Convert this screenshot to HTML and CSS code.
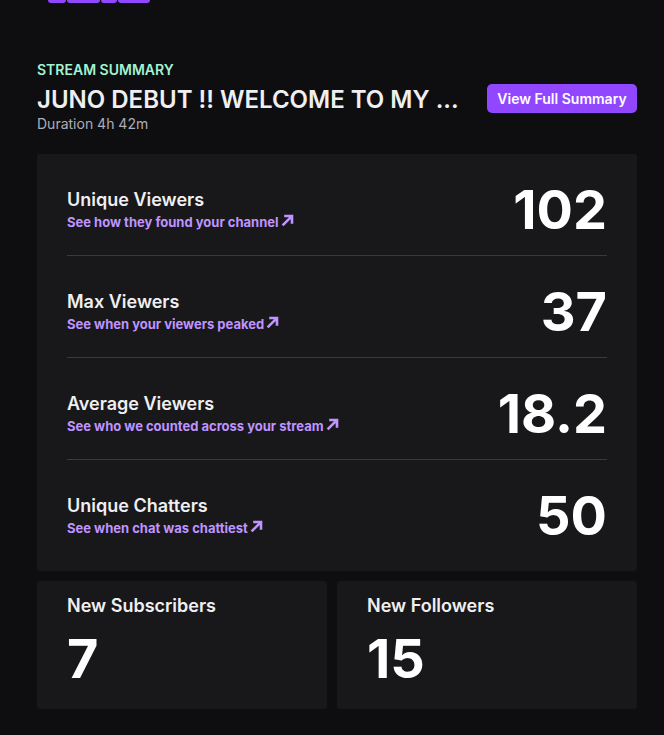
FILE: index.html
```html
<!DOCTYPE html>
<html lang="en">
<head>
<meta charset="utf-8">
<title>Stream Summary</title>
<link rel="stylesheet" href="styles.css">
</head>
<body>
<div class="topbar">
  <span class="seg s1"></span><span class="seg s2"></span><span class="seg s3"></span><span class="seg s4"></span>
</div>
<main class="page">
  <header class="head">
    <div class="head-text">
      <div class="eyebrow">STREAM SUMMARY</div>
      <h1 class="title">JUNO DEBUT !! WELCOME TO MY ...</h1>
      <div class="duration">Duration 4h 42m</div>
    </div>
    <button class="btn">View Full Summary</button>
  </header>

  <section class="card stats">
    <div class="row">
      <div class="row-text">
        <div class="label">Unique Viewers</div>
        <a class="link">See how they found your channel<svg class="arrow" viewBox="0 0 13 13" width="13" height="13"><path d="M1.6 11.4 L10.6 2.4 M3.2 2 H11 V9.8" fill="none" stroke="#bf94ff" stroke-width="2.6"/></svg></a>
      </div>
      <div class="num">102</div>
    </div>
    <div class="row">
      <div class="row-text">
        <div class="label">Max Viewers</div>
        <a class="link">See when your viewers peaked<svg class="arrow" viewBox="0 0 13 13" width="13" height="13"><path d="M1.6 11.4 L10.6 2.4 M3.2 2 H11 V9.8" fill="none" stroke="#bf94ff" stroke-width="2.6"/></svg></a>
      </div>
      <div class="num">37</div>
    </div>
    <div class="row">
      <div class="row-text">
        <div class="label">Average Viewers</div>
        <a class="link">See who we counted across your stream<svg class="arrow" viewBox="0 0 13 13" width="13" height="13"><path d="M1.6 11.4 L10.6 2.4 M3.2 2 H11 V9.8" fill="none" stroke="#bf94ff" stroke-width="2.6"/></svg></a>
      </div>
      <div class="num">18.2</div>
    </div>
    <div class="row last">
      <div class="row-text">
        <div class="label">Unique Chatters</div>
        <a class="link">See when chat was chattiest<svg class="arrow" viewBox="0 0 13 13" width="13" height="13"><path d="M1.6 11.4 L10.6 2.4 M3.2 2 H11 V9.8" fill="none" stroke="#bf94ff" stroke-width="2.6"/></svg></a>
      </div>
      <div class="num">50</div>
    </div>
  </section>

  <section class="pair">
    <div class="card small subs">
      <div class="label">New Subscribers</div>
      <div class="num">7</div>
    </div>
    <div class="card small follows">
      <div class="label">New Followers</div>
      <div class="num">15</div>
    </div>
  </section>
</main>
</body>
</html>
```
FILE: styles.css
```css
* { box-sizing: border-box; }
html, body { margin: 0; padding: 0; }
body {
  background: #0e0e10;
  color: #efeff1;
  font-family: Inter, "Noto Sans", sans-serif;
  width: 664px;
  height: 735px;
  overflow: hidden;
}
.topbar {
  display: flex;
  gap: 1px;
  padding-left: 48px;
  height: 3px;
}
.seg {
  display: block;
  height: 3px;
  background: #9147ff;
  border-radius: 0 0 3px 3px;
}
.s1 { width: 18px; }
.s2 { width: 33px; }
.s3 { width: 16px; }
.s4 { width: 32px; }

.page {
  width: 600px;
  margin-left: 37px;
  padding-top: 58px;
}
.head {
  display: flex;
  align-items: flex-start;
  justify-content: space-between;
}
.eyebrow {
  color: #a3f2d2;
  font-size: 14px;
  line-height: 17px;
  font-weight: 600;
}
.title {
  margin: 7px 0 0;
  font-size: 24px;
  line-height: 29px;
  font-weight: 600;
  color: #efeff1;
}
.duration {
  margin-top: 1px;
  font-size: 14px;
  line-height: 17px;
  color: #adadb8;
}
.btn {
  margin-top: 23px;
  width: 150px;
  height: 29px;
  border: 0;
  border-radius: 5px;
  background: #9147ff;
  color: #ffffff;
  font-family: Inter, "Noto Sans", sans-serif;
  font-size: 14px;
  font-weight: 600;
  padding: 0;
}

.card {
  background: #18181b;
  border-radius: 3px;
}
.stats {
  margin-top: 22px;
  padding: 0 30px;
}
.row {
  display: flex;
  align-items: center;
  justify-content: space-between;
  padding: 25px 0 15px;
  border-bottom: 1px solid #3a3a3d;
}
.row.last {
  border-bottom: 0;
  padding-bottom: 25px;
}
.row-text {
  display: flex;
  flex-direction: column;
  gap: 4px;
}
.label {
  font-size: 18px;
  line-height: 21px;
  font-weight: 600;
  color: #efeff1;
}
.link {
  display: flex;
  align-items: center;
  gap: 2px;
  font-size: 13px;
  line-height: 16px;
  font-weight: 700;
  color: #bf94ff;
}
.arrow { display: block; margin-top: -3px; }
.num {
  font-size: 54px;
  line-height: 61px;
  font-weight: 700;
  color: #ffffff;
}

.pair {
  display: flex;
  gap: 10px;
  margin-top: 10px;
}
.small {
  padding: 14px 30px 20px;
}
.subs { width: 290px; }
.follows { width: 300px; }
.small .label {
  font-size: 18px;
  line-height: 22px;
}
.small .num {
  margin-top: 11px;
}
```
